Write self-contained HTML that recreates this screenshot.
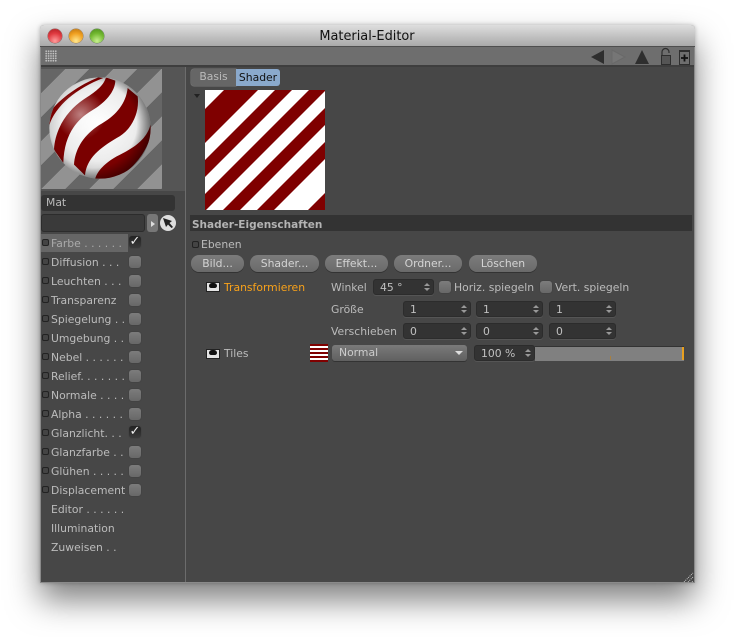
<!DOCTYPE html>
<html><head><meta charset="utf-8"><style>
html,body{margin:0;padding:0;background:#fff;width:734px;height:637px;overflow:hidden}
body{position:relative;font-family:"DejaVu Sans","Liberation Sans",sans-serif;font-size:10.8px;color:#bcbcbc}
div,span.a{position:absolute;box-sizing:border-box}
.t{white-space:nowrap;line-height:14px;height:14px;margin-top:1px}
.dot{width:7px;height:7px;left:42px;border:1px solid #222;border-radius:2px;background:#444}
.cb{width:12px;height:12px;left:129px;border-radius:3px;background:linear-gradient(#7c7c7c,#686868);box-shadow:0 0 1px #333}
.cb2{width:12px;height:12px;border-radius:3px;background:linear-gradient(#7c7c7c,#686868);box-shadow:0 0 1px #333}
.on{background:linear-gradient(#222,#3a3a3a);color:#eee;font-size:13px;line-height:11px;text-align:center;font-style:italic}
.btn{height:17px;top:255px;border-radius:8px;background:linear-gradient(#7c7c7c,#6a6a6a);box-shadow:0 1px 0 #333;text-align:center;line-height:17px;color:#d4d4d4}
.f{height:16px;background:#333;border-radius:3px;border:1px solid #2c2c2c;box-shadow:0 1px 0 #555;line-height:16px;padding-left:6px;color:#c0c0c0}
.f:after{content:"";position:absolute;right:3px;top:3px;width:0;height:0;border:3px solid transparent;border-top:0;border-bottom:3px solid #999;}
.f:before{content:"";position:absolute;right:3px;top:8px;width:0;height:0;border:3px solid transparent;border-bottom:0;border-top:3px solid #999;}
.eye{width:14px;height:10px;left:206px;background:#e4e4e4;border:1px solid #222}
.eye:after{content:"";position:absolute;left:2px;top:0;width:8px;height:5px;background:#111;border-radius:4px 4px 3px 3px}
</style></head><body>
<div style="left:40px;top:25px;width:655px;height:558px;background:#474747;box-shadow:0 17px 32px rgba(0,0,0,.5),0 0 4px rgba(0,0,0,.25);border-radius:4px 4px 0 0;border-left:1px solid #8a8a8a;border-right:1px solid #8a8a8a;border-bottom:1px solid #8a8a8a"></div>
<div style="left:40px;top:25px;width:655px;height:22px;background:linear-gradient(#dedede,#a9a9a9);border-radius:4px 4px 0 0;border-bottom:1px solid #4e4e4e"></div>
<div class="t" style="left:40px;width:654px;top:29px;text-align:center;color:#111;font-size:12.9px">Material-Editor</div>
<div style="left:48px;top:29px;width:14px;height:14px;border-radius:50%;background:radial-gradient(circle at 50% 85%,#ff9c9c,#e03a40 55%,#a81c20);box-shadow:0 0 0 .5px #8a5a5a"></div>
<div style="left:69px;top:29px;width:14px;height:14px;border-radius:50%;background:radial-gradient(circle at 50% 85%,#ffe890,#f0a020 55%,#b87010);box-shadow:0 0 0 .5px #91795a"></div>
<div style="left:90px;top:29px;width:14px;height:14px;border-radius:50%;background:radial-gradient(circle at 50% 85%,#c8f090,#72b830 55%,#4a8a1c);box-shadow:0 0 0 .5px #65805a"></div>

<div style="left:41px;top:47px;width:653px;height:20px;background:#6e6e6e;border-bottom:2px solid #3e3e3e"></div>
<div style="left:45px;top:50px;width:12px;height:12px;background-image:radial-gradient(#c4c4c4 0.8px,transparent 1px);background-size:2.4px 2.4px"></div>
<svg style="position:absolute;left:585px;top:45px" width="110" height="22" viewBox="0 0 110 22">
<path d="M6 12 L19 5 V19 Z" fill="#2e2e2e"/>
<path d="M27 5 L40 12 L27 19 Z" fill="#767676" stroke="#696969"/>
<path d="M57 5 L64 19 H50 Z" fill="#2e2e2e"/>
<path d="M77 10 V7 a3.5 3.5 0 0 1 7 0 V8" fill="none" stroke="#2e2e2e" stroke-width="1.2"/>
<rect x="76.500" y="10.500" width="9" height="9" fill="#555" stroke="#2e2e2e"/>
<rect x="94.500" y="5.500" width="10" height="14" fill="#6e6e6e" stroke="#2e2e2e"/><rect x="94" y="5" width="11" height="2" fill="#2e2e2e"/>
<path d="M99.500 9.500 V16.500 M96 13 H103" stroke="#111" stroke-width="1.8"/>
</svg>

<div style="left:185px;top:67px;width:1px;height:515px;background:#6c6c6c"></div>
<div style="left:41px;top:67px;width:144px;height:124px;background:#555"></div>
<div style="left:41px;top:69px;width:121px;height:120px;background:repeating-linear-gradient(135deg,#666 0 17px,#929292 17px 34px)"></div>
<svg style="position:absolute;left:40px;top:68px" width="125" height="122" viewBox="0 0 375 366">
<defs>
<radialGradient id="w" cx="0.47" cy="0.46" r="0.55"><stop offset="0" stop-color="#fff"/><stop offset="0.55" stop-color="#ececec"/><stop offset="0.85" stop-color="#b8b8b8"/><stop offset="1" stop-color="#777"/></radialGradient>
<radialGradient id="h" gradientUnits="userSpaceOnUse" cx="122" cy="140" r="75"><stop offset="0" stop-color="#fff" stop-opacity=".5"/><stop offset="1" stop-color="#fff" stop-opacity="0"/></radialGradient>
<radialGradient id="s" gradientUnits="userSpaceOnUse" cx="160" cy="170" r="180"><stop offset="0.72" stop-color="#000" stop-opacity="0"/><stop offset="1" stop-color="#000" stop-opacity=".55"/></radialGradient>
<clipPath id="c"><circle cx="180" cy="180" r="152"/></clipPath>
</defs>
<g clip-path="url(#c)">
<rect width="375" height="366" fill="url(#w)"/>
<g fill="#7a0000">
<path d="M28 172 C45 115 110 60 190 30 L175 28 C120 50 60 90 28 135 Z"/>
<path d="M42 245 C45 180 85 125 130 95 C165 72 190 55 198 28 L226 38 C225 72 195 105 155 128 C105 158 72 205 70 285 Z"/>
<path d="M263 60 C258 105 230 140 188 165 C135 195 105 240 102 290 L135 322 C140 270 180 240 230 210 C270 190 300 140 293 85 Z"/>
<path d="M332 168 C320 220 270 245 230 265 C195 285 170 310 165 335 L215 332 C270 320 325 250 335 190 Z"/>
<path d="M240 327 C280 315 310 280 322 250" fill="none" stroke="#7a0000" stroke-width="2"/>
</g>
<rect width="375" height="366" fill="url(#h)"/>
<rect width="375" height="366" fill="url(#s)"/>
</g>
</svg>

<div class="t" style="left:41px;top:195px;width:134px;height:16px;background:#333;border-radius:3px;padding-left:5px;line-height:16px;color:#bbb;margin-top:0">Mat</div>
<div style="left:41px;top:214px;width:104px;height:18px;background:#3a3a3a;border:1px solid #2c2c2c;border-radius:3px"></div>
<div style="left:147px;top:214px;width:11px;height:18px;background:#777;border-radius:3px"></div>
<div style="left:151px;top:221px;width:0;height:0;border:3px solid transparent;border-left:4px solid #ddd;border-right:0"></div>
<div style="left:160px;top:215px;width:16px;height:16px;border-radius:50%;background:#ddd"></div>
<svg style="position:absolute;left:160px;top:215px" width="16" height="16"><path d="M3 3 L12 6 L9.500 8 L13 12 L11.500 13 L8 9.500 L6 12 Z" fill="#222"/></svg>

<div style="left:41px;top:234px;width:87px;height:18px;background:#666"></div>
<div class="t" style="left:51px;top:236px;color:#aaa">Farbe . . . . . .</div>
<div class="t" style="left:51px;top:255px">Diffusion  . . .</div>
<div class="t" style="left:51px;top:274px">Leuchten  . . .</div>
<div class="t" style="left:51px;top:293px">Transparenz</div>
<div class="t" style="left:51px;top:312px">Spiegelung . .</div>
<div class="t" style="left:51px;top:331px">Umgebung . .</div>
<div class="t" style="left:51px;top:350px">Nebel  . . . . . .</div>
<div class="t" style="left:51px;top:369px">Relief. . . . . . .</div>
<div class="t" style="left:51px;top:388px">Normale . . . .</div>
<div class="t" style="left:51px;top:407px">Alpha  . . . . . .</div>
<div class="t" style="left:51px;top:426px">Glanzlicht. . .</div>
<div class="t" style="left:51px;top:445px">Glanzfarbe . .</div>
<div class="t" style="left:51px;top:464px">Glühen  . . . . .</div>
<div class="t" style="left:51px;top:483px">Displacement</div>
<div class="t" style="left:51px;top:502px">Editor  . . . . . .</div>
<div class="t" style="left:51px;top:521px">Illumination</div>
<div class="t" style="left:51px;top:540px">Zuweisen  . .</div>

<div class="dot" style="top:239px"></div><div class="dot" style="top:258px"></div><div class="dot" style="top:277px"></div><div class="dot" style="top:296px"></div><div class="dot" style="top:315px"></div><div class="dot" style="top:334px"></div><div class="dot" style="top:353px"></div><div class="dot" style="top:372px"></div><div class="dot" style="top:391px"></div><div class="dot" style="top:410px"></div><div class="dot" style="top:429px"></div><div class="dot" style="top:448px"></div><div class="dot" style="top:467px"></div><div class="dot" style="top:486px"></div>

<div class="cb on" style="top:236px">✓</div>
<div class="cb" style="top:256px"></div><div class="cb" style="top:275px"></div><div class="cb" style="top:294px"></div><div class="cb" style="top:313px"></div><div class="cb" style="top:332px"></div><div class="cb" style="top:351px"></div><div class="cb" style="top:370px"></div><div class="cb" style="top:389px"></div><div class="cb" style="top:408px"></div>
<div class="cb on" style="top:426px">✓</div>
<div class="cb" style="top:446px"></div><div class="cb" style="top:465px"></div><div class="cb" style="top:484px"></div>

<div class="t" style="left:191px;top:69px;width:45px;height:17px;background:#666;border-radius:3px 0 0 3px;box-shadow:0 0 0 .5px #777;text-align:center;line-height:16px;color:#bbb;margin-top:0">Basis</div>
<div class="t" style="left:236px;top:69px;width:44px;height:17px;background:#8aa9cc;border-radius:0 3px 3px 0;text-align:center;line-height:17px;color:#111;margin-top:0">Shader</div>
<div style="left:194px;top:94px;width:0;height:0;border:3.500px solid transparent;border-top:4px solid #222;border-bottom:0"></div>
<svg style="position:absolute;left:205px;top:90px" width="120" height="120" viewBox="0 0 120 120">
<rect width="120" height="120" fill="#fff"/>
<g fill="#7f0000">
<path d="M19 0 H53 L0 53 V19 Z"/>
<path d="M70 0 H87 L0 87 V70 Z"/>
<path d="M104 0 H120 V1 L1 120 H0 V104 Z"/>
<path d="M120 18 V35 L35 120 H18 Z"/>
<path d="M120 52 V69 L69 120 H52 Z"/>
<path d="M120 103 V120 H103 Z"/>
</g></svg>

<div style="left:190px;top:215px;width:502px;height:16px;background:#333"></div>
<div class="t" style="left:192px;top:217px;font-weight:bold;color:#b4b4b4;font-size:10.500px">Shader-Eigenschaften</div>
<div class="dot" style="left:192px;top:241px"></div>
<div class="t" style="left:201px;top:237px">Ebenen</div>
<div class="btn" style="left:191px;width:53px">Bild...</div>
<div class="btn" style="left:250px;width:69px">Shader...</div>
<div class="btn" style="left:325px;width:63px">Effekt...</div>
<div class="btn" style="left:394px;width:68px">Ordner...</div>
<div class="btn" style="left:469px;width:68px">Löschen</div>

<div class="eye" style="top:282px"></div>
<div class="t" style="left:224px;top:280px;color:#f9a21a">Transformieren</div>
<div class="t" style="left:331px;top:280px">Winkel</div>
<div class="f" style="left:373px;top:279px;width:61px">45 °</div>
<div class="cb2" style="left:439px;top:281px"></div>
<div class="t" style="left:454px;top:280px">Horiz. spiegeln</div>
<div class="cb2" style="left:540px;top:281px"></div>
<div class="t" style="left:555px;top:280px">Vert. spiegeln</div>

<div class="t" style="left:331px;top:302px">Größe</div>
<div class="f" style="left:403px;top:301px;width:68px">1</div>
<div class="f" style="left:476px;top:301px;width:67px">1</div>
<div class="f" style="left:549px;top:301px;width:67px">1</div>
<div class="t" style="left:331px;top:324px">Verschieben</div>
<div class="f" style="left:403px;top:323px;width:68px">0</div>
<div class="f" style="left:476px;top:323px;width:67px">0</div>
<div class="f" style="left:549px;top:323px;width:67px">0</div>

<div class="eye" style="top:349px"></div>
<div class="t" style="left:224px;top:346px">Tiles</div>
<div style="left:310px;top:344px;width:18px;height:18px;background:repeating-linear-gradient(#7f0000 0 2px,#fff 2px 4px)"></div>
<div style="left:332px;top:345px;width:135px;height:16px;background:linear-gradient(#7a7a7a,#606060);border-radius:3px;box-shadow:0 1px 0 #333;line-height:16px;padding-left:7px;color:#ccc">Normal</div>
<div style="left:455px;top:351px;width:0;height:0;border:4px solid transparent;border-top:4px solid #ddd;border-bottom:0"></div>
<div class="f" style="left:474px;top:345px;width:61px">100 %</div>
<div style="left:535px;top:346px;width:149px;height:15px;background:#808080;border-top:1px solid #333"></div>
<div style="left:682px;top:347px;width:2px;height:13px;background:#e8a020"></div>
<div style="left:610px;top:356px;width:1px;height:4px;background:#a88040"></div>

<svg style="position:absolute;left:683px;top:572px" width="12" height="11"><path d="M1 10 L10 1 M5 10 L10 5 M9 10 L10 9" stroke="#c8c8c8" stroke-width="1" stroke-dasharray="1 1"/></svg>
</body></html>
